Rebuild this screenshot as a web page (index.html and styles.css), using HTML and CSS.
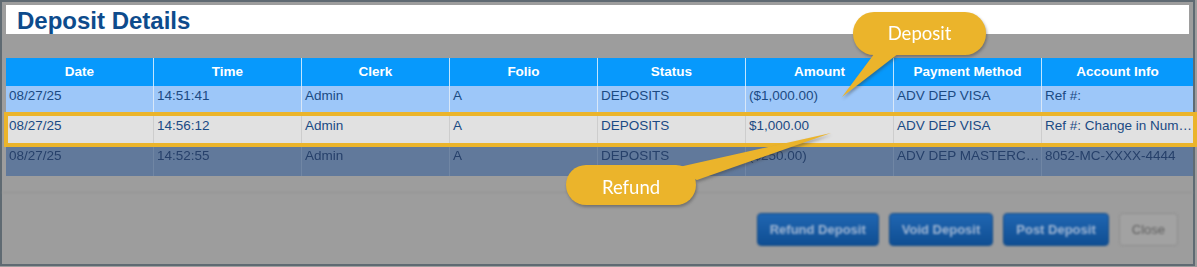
FILE: index.html
```html
<!DOCTYPE html>
<html>
<head>
<meta charset="utf-8">
<link rel="stylesheet" href="styles.css">
</head>
<body>
<div class="frame">
  <div class="title"><h1>Deposit Details</h1></div>

  <div class="grid">
    <div class="row head">
      <div class="cell">Date</div>
      <div class="cell">Time</div>
      <div class="cell">Clerk</div>
      <div class="cell">Folio</div>
      <div class="cell">Status</div>
      <div class="cell">Amount</div>
      <div class="cell">Payment Method</div>
      <div class="cell">Account Info</div>
    </div>
    <div class="row r1">
      <div class="cell">08/27/25</div>
      <div class="cell">14:51:41</div>
      <div class="cell">Admin</div>
      <div class="cell">A</div>
      <div class="cell">DEPOSITS</div>
      <div class="cell">($1,000.00)</div>
      <div class="cell">ADV DEP VISA</div>
      <div class="cell">Ref #:</div>
    </div>
    <div class="row r2">
      <div class="cell">08/27/25</div>
      <div class="cell">14:56:12</div>
      <div class="cell">Admin</div>
      <div class="cell">A</div>
      <div class="cell">DEPOSITS</div>
      <div class="cell">$1,000.00</div>
      <div class="cell">ADV DEP VISA</div>
      <div class="cell">Ref #: Change in Num…</div>
    </div>
    <div class="row r3">
      <div class="cell">08/27/25</div>
      <div class="cell">14:52:55</div>
      <div class="cell">Admin</div>
      <div class="cell">A</div>
      <div class="cell">DEPOSITS</div>
      <div class="cell">($250.00)</div>
      <div class="cell">ADV DEP MASTERC…</div>
      <div class="cell">8052-MC-XXXX-4444</div>
    </div>
  </div>

  <div class="footer">
    <button class="btn primary">Refund Deposit</button>
    <button class="btn primary">Void Deposit</button>
    <button class="btn primary">Post Deposit</button>
    <button class="btn plain">Close</button>
  </div>
</div>

<div class="highlight"></div>

<div class="callout deposit">
  <svg class="tail" width="145" height="86" viewBox="0 0 145 86">
    <polygon points="35,38 61,38 0,85" fill="#ebb42b"/>
  </svg>
  <div class="bubble">Deposit</div>
</div>

<div class="callout refund">
  <svg class="tail" width="266" height="73" viewBox="0 0 266 73">
    <polygon points="104,36 131,47 265,0" fill="#ebb42b"/>
  </svg>
  <div class="bubble">Refund</div>
</div>
</body>
</html>
```

FILE: styles.css
```css
* { box-sizing: border-box; }

html, body {
  margin: 0;
  padding: 0;
}

body {
  position: relative;
  width: 1197px;
  height: 267px;
  background: #9d9d9d;
  font-family: "Liberation Sans", Arial, sans-serif;
  overflow: hidden;
}

.frame {
  width: 1195px;
  height: 266px;
  border: 2px solid #5f6a72;
  background: #9d9d9d;
  display: flex;
  flex-direction: column;
}

.title {
  margin: 3px 4px 0 4px;
  height: 29px;
  background: #ffffff;
  padding-left: 11px;
  display: flex;
  align-items: center;
}

.title h1 {
  margin: 0;
  font-size: 24px;
  font-weight: bold;
  color: #0d4b8c;
  line-height: 29px;
  padding-top: 1px;
}

.grid {
  margin: 24px 0 0 4px;
  display: flex;
  flex-direction: column;
}

.row {
  display: grid;
  grid-template-columns: repeat(7, 148px) 1fr;
  height: 30px;
}

.cell {
  border-right: 1px solid transparent;
  white-space: nowrap;
  overflow: hidden;
  font-size: 13.5px;
  line-height: 16px;
  padding: 2px 3px 0 3px;
  color: #1a4a84;
}

.cell:last-child { border-right: none; }

.head {
  height: 28px;
  background: #0799fc;
}

.head .cell {
  color: #ffffff;
  font-weight: bold;
  font-size: 13.5px;
  text-align: center;
  line-height: 28px;
  padding: 0;
  border-right-color: rgba(255, 255, 255, 0.75);
}

.r1 {
  background: #9dc7f9;
}
.r1 .cell { border-right-color: #d8e7f8; }

.r2 {
  background: #e1e1e1;
}
.r2 .cell { border-right-color: #cdcdcd; }

.r3 {
  background: #61799b;
  filter: blur(0.7px);
}
.r3 .cell {
  color: #26406a;
  border-right-color: #7086a4;
}

.footer {
  margin-top: 16px;
  border-top: 1px solid #939393;
  padding: 20px 15px 0 0;
  display: flex;
  justify-content: flex-end;
  gap: 10px;
  filter: blur(0.8px);
}

.btn {
  height: 33px;
  border-radius: 4px;
  font-family: "Liberation Sans", Arial, sans-serif;
  font-size: 13px;
  padding: 0 12px;
  cursor: default;
}

.btn.primary {
  background: linear-gradient(#2066b2, #0f4e93);
  border: 1px solid #134a85;
  color: #a3b8d4;
  font-weight: bold;
}

.btn.plain {
  background: #a2a2a2;
  border: 1px solid #8e8e8e;
  color: #5e5e5e;
}

.highlight {
  position: absolute;
  left: 4px;
  top: 112px;
  width: 1193px;
  height: 35px;
  border: 4px solid #ebb42b;
}

.callout {
  position: absolute;
  filter: drop-shadow(1px 2px 1.5px rgba(60, 60, 60, 0.45));
}

.callout .tail {
  position: absolute;
  left: 0;
  top: 0;
}

.bubble {
  position: absolute;
  background: #ebb42b;
  color: #ffffff;
  font-family: Lato, "Open Sans", sans-serif;
  font-size: 18.5px;
  display: flex;
  align-items: center;
  justify-content: center;
}

.deposit {
  left: 842px;
  top: 12px;
  width: 145px;
  height: 86px;
}

.deposit .bubble {
  left: 11px;
  top: 0;
  width: 133px;
  height: 43px;
  border-radius: 21px;
  padding-bottom: 2px;
}

.refund {
  left: 566px;
  top: 133px;
  width: 266px;
  height: 73px;
}

.refund .bubble {
  left: 0;
  top: 32px;
  width: 130px;
  height: 40px;
  border-radius: 20px;
  padding-top: 4px;
}
```
